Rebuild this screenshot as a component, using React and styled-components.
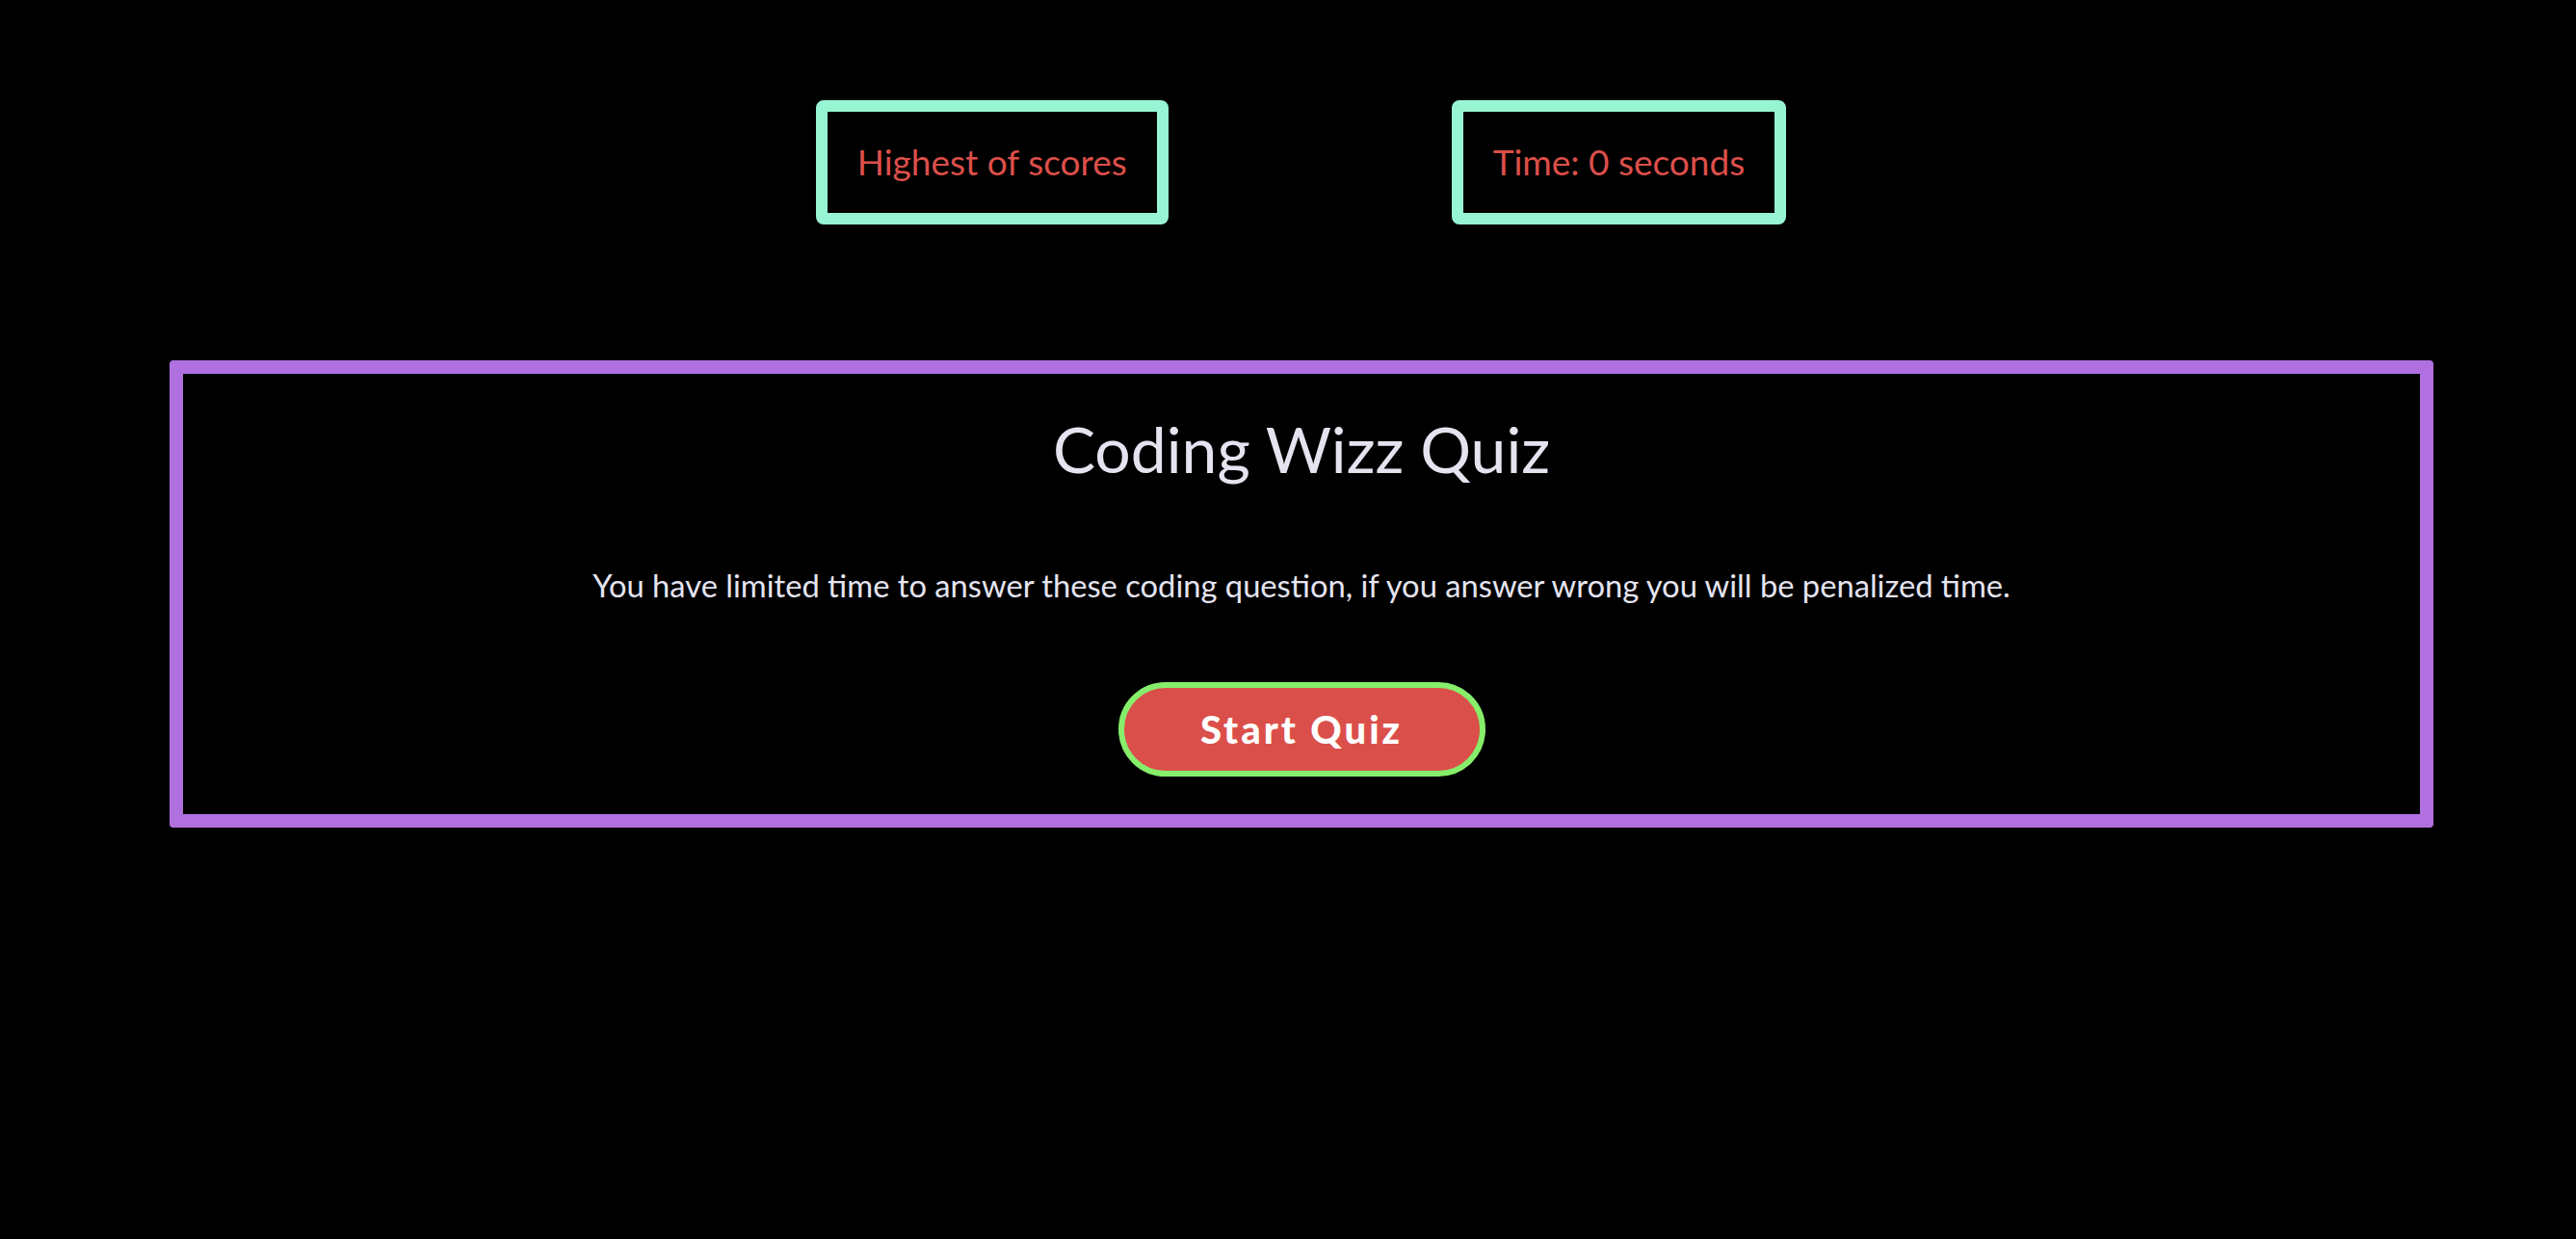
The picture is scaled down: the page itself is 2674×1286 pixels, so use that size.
import React from "react";
import styled, { createGlobalStyle } from "styled-components";

const GlobalStyle = createGlobalStyle`
  html, body {
    margin: 0;
    padding: 0;
    background: #000000;
  }
  body {
    font-family: Lato, "Noto Sans", "Liberation Sans", sans-serif;
  }
`;

const Page = styled.div`
  min-height: 1286px;
  background: #000000;
  display: flex;
  flex-direction: column;
`;

const Header = styled.header`
  display: flex;
  justify-content: center;
  gap: 294px;
  padding-top: 104px;
  padding-left: 27px;
`;

const ScoreBox = styled.div`
  box-sizing: border-box;
  height: 129px;
  padding: 0 31px;
  display: flex;
  align-items: center;
  border: 12px solid #98f5d4;
  border-radius: 8px;
  color: #dc4f4a;
  font-size: 37px;
  line-height: 1.2;
  white-space: nowrap;
`;

const Card = styled.main`
  box-sizing: border-box;
  height: 485px;
  margin: 141px 148px 0 176px;
  border: 14px solid #b070e0;
  border-radius: 4px;
  display: flex;
  flex-direction: column;
  align-items: center;
  color: #e4e4f0;
`;

const Title = styled.h1`
  margin: 38px 0 0;
  font-size: 66px;
  font-weight: 400;
  line-height: 1.2;
`;

const Intro = styled.p`
  margin: 83px 0 0;
  font-size: 32.7px;
  line-height: 1.2;
`;

const StartButton = styled.button`
  box-sizing: border-box;
  margin-top: 81px;
  width: 381px;
  height: 98px;
  border: 6px solid #86ee6b;
  border-radius: 49px;
  background: #db4f4a;
  color: #ffffff;
  font-family: Lato, "Noto Sans", sans-serif;
  font-weight: 900;
  font-size: 40px;
  letter-spacing: 3px;
  padding: 0;
  cursor: pointer;
`;

export default function App() {
  return (
    <>
      <GlobalStyle />
      <Page>
        <Header>
          <ScoreBox>Highest of scores</ScoreBox>
          <ScoreBox>Time: 0 seconds</ScoreBox>
        </Header>
        <Card>
          <Title>Coding Wizz Quiz</Title>
          <Intro>
            You have limited time to answer these coding question, if you answer wrong you will be penalized time.
          </Intro>
          <StartButton>Start Quiz</StartButton>
        </Card>
      </Page>
    </>
  );
}
